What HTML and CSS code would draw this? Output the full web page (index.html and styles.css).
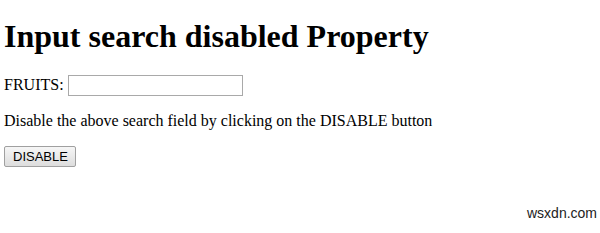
FILE: index.html
```html
<!DOCTYPE html>
<html>
<head>
  <meta charset="utf-8">
  <title>Input search disabled Property</title>
  <link rel="stylesheet" href="styles.css">
</head>
<body>
  <h1>Input search disabled Property</h1>
  <p>FRUITS: <input type="search" id="fruits" class="search-box"></p>
  <p>Disable the above search field by clicking on the DISABLE button</p>
  <button type="button" class="btn" onclick="disableSearch()">DISABLE</button>
  <div class="watermark">wsxdn.com</div>
  <script>
    function disableSearch() {
      document.getElementById('fruits').disabled = true;
    }
  </script>
</body>
</html>
```

FILE: styles.css
```css
body {
  font-family: "Liberation Serif", "Times New Roman", serif;
  font-size: 16px;
  color: #000;
  margin: 0 4px;
  background: #fff;
}
h1 { font-size: 32px; margin: 18px 0 21px; line-height: 36px; }
p { margin: 16px 0; }
.search-box {
  box-sizing: border-box;
  width: 175px;
  height: 21px;
  padding: 1px 2px;
  border: 1px solid #a9a9a9;
  font: 13px "Liberation Sans", Arial, sans-serif;
}
.btn {
  box-sizing: border-box;
  font: 13px "Liberation Sans", Arial, sans-serif;
  color: #000;
  padding: 2px 8px;
  background: linear-gradient(#f6f6f6, #dddddd);
  border: 1px solid #a0a0a0;
  border-radius: 2px;
  width: 72px;
  height: 21px;
}
.watermark {
  position: absolute;
  left: 527px;
  top: 205px;
  font: 14px "Liberation Sans", Arial, sans-serif;
  color: #222;
}
```
